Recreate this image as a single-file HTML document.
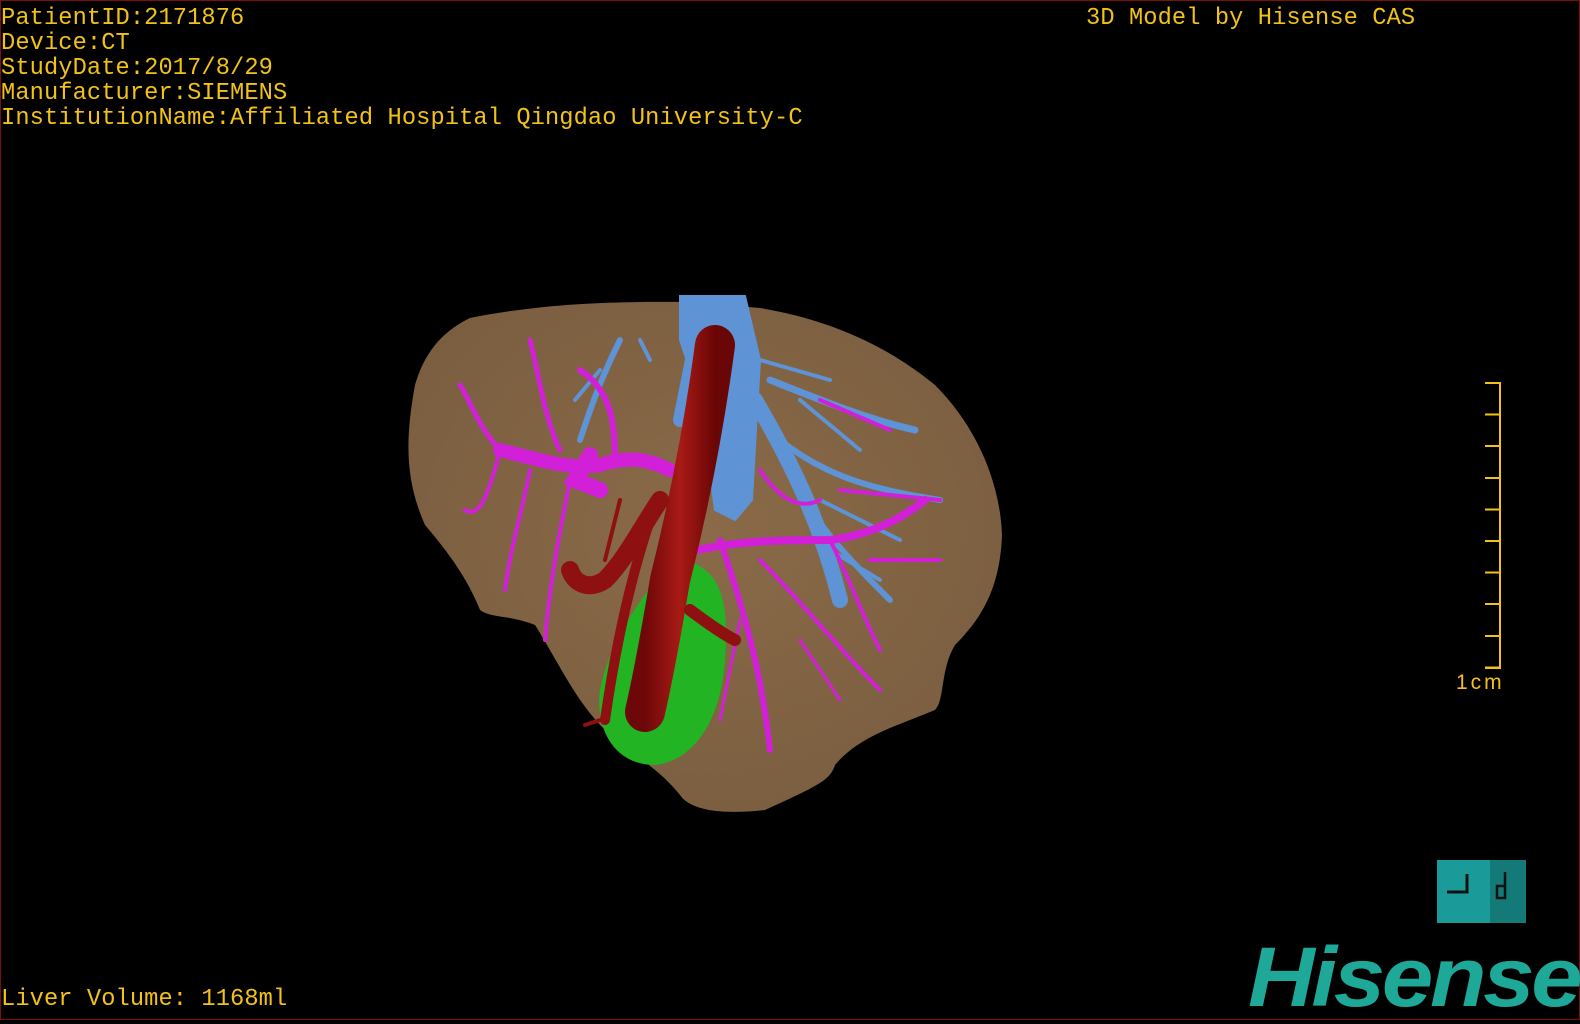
<!DOCTYPE html>
<html><head><meta charset="utf-8"><style>
html,body{margin:0;padding:0;background:#000;}
body{width:1580px;height:1020px;position:relative;overflow:hidden;}
.fr{position:absolute;left:0;top:0;width:1578px;height:1018px;border:1px solid #7a1010;}
.t{position:absolute;color:#f2c218;font-family:"Liberation Mono",monospace;font-size:23.7px;line-height:25px;white-space:pre;letter-spacing:0.1px;}
</style></head><body>
<svg width="1580" height="1020" style="position:absolute;left:0;top:0">
<defs>
<radialGradient id="lv" cx="0.5" cy="0.45" r="0.6"><stop offset="0" stop-color="#8a6a48"/><stop offset="1" stop-color="#7a5e40"/></radialGradient>
<linearGradient id="ar" x1="0" x2="1"><stop offset="0" stop-color="#6e0808"/><stop offset="0.5" stop-color="#a81a16"/><stop offset="1" stop-color="#6a0606"/></linearGradient>
</defs>
<path fill="url(#lv)" d="M470,318 C560,300 640,302 690,302 L760,308 C820,318 880,340 935,385 C975,425 1000,480 1002,535 C1000,590 980,620 955,645 C940,670 945,700 935,710 C900,725 860,735 835,765 C830,780 820,785 765,810 C720,815 690,810 680,795 C660,770 640,760 605,730 C575,700 560,665 535,625 C510,615 490,618 480,610 C470,585 455,560 425,525 C405,480 405,440 415,385 C425,350 445,330 470,318 Z"/>
<g stroke="#5e93d6" fill="none" stroke-linecap="round">
<path d="M680,296 L745,296 L760,360 L752,500 L735,520 L715,510 L700,400 L680,340 Z" fill="#5e93d6" stroke-width="2"/>
<path d="M700,320 L680,420" stroke-width="14"/>
<path d="M755,400 C790,460 820,520 840,600" stroke-width="16"/>
<path d="M770,380 C820,400 870,420 915,430" stroke-width="7"/>
<path d="M780,440 C830,480 880,490 940,500" stroke-width="6"/>
<path d="M790,470 C810,520 850,560 890,600" stroke-width="6"/>
<path d="M760,360 L830,380 M800,400 L860,450 M820,500 L900,540 M830,550 L880,580" stroke-width="4"/>
<path d="M620,340 C600,380 590,410 580,440" stroke-width="6"/>
<path d="M600,370 L575,400 M640,340 L650,360" stroke-width="4"/>
</g>
<g stroke="#d21fd8" fill="none" stroke-linecap="round">
<path d="M500,450 C540,460 570,470 600,465 C630,455 650,460 670,470" stroke-width="14"/>
<path d="M590,455 L575,480 L600,490" stroke-width="16"/>
<path d="M560,450 C545,420 540,380 530,340" stroke-width="5"/>
<path d="M500,450 C480,430 470,400 460,385" stroke-width="5"/>
<path d="M500,450 C490,490 480,520 465,510 M530,470 C520,520 510,550 505,590" stroke-width="4"/>
<path d="M570,480 C560,530 550,580 545,640" stroke-width="4"/>
<path d="M615,460 C615,420 610,390 580,370" stroke-width="6"/>
<path d="M660,560 C720,540 780,540 830,540 C870,535 900,520 925,500" stroke-width="8"/>
<path d="M720,540 C740,600 760,660 770,750" stroke-width="6"/>
<path d="M760,560 C800,600 840,650 880,690" stroke-width="4"/>
<path d="M830,540 C850,580 860,610 880,650" stroke-width="4"/>
<path d="M760,470 C780,500 800,510 820,500 M820,400 L890,430 M840,490 L940,500 M870,560 L940,560" stroke-width="4"/>
<path d="M740,620 L720,720 M800,640 L840,700" stroke-width="3"/>
</g>
<path fill="#22b422" d="M680,560 C720,565 730,600 725,660 C722,710 700,760 655,765 C615,765 595,730 600,690 C610,640 640,600 660,575 Z"/>
<g stroke-linecap="round" fill="none">
<path d="M715,345 C705,420 690,500 670,580 C660,640 650,690 645,712" stroke="url(#ar)" stroke-width="40"/>
<path d="M660,500 C640,530 625,560 605,580 C590,590 575,585 570,570" stroke="#8e1010" stroke-width="18"/>
<path d="M650,520 C630,580 615,650 605,720" stroke="#8e1010" stroke-width="10"/>
<path d="M690,610 C710,625 725,635 735,640" stroke="#8e1010" stroke-width="12"/>
<path d="M620,500 L605,560 M600,720 L585,725" stroke="#8e1010" stroke-width="4"/>
</g>
</svg>
<div class="fr"></div>
<div class="t" style="left:1px;top:6px">PatientID:2171876
Device:CT
StudyDate:2017/8/29
Manufacturer:SIEMENS
InstitutionName:Affiliated Hospital Qingdao University-C</div>
<div class="t" style="left:1086px;top:6px">3D Model by Hisense CAS</div>
<div class="t" style="left:1px;top:987px">Liver Volume: 1168ml</div>
<div style="position:absolute;left:1499px;top:382px;width:2px;height:287px;background:#f2c218"></div>
<div style="position:absolute;left:1485px;top:382px;width:16px;height:285px;background:repeating-linear-gradient(to bottom,#f2c218 0,#f2c218 2px,transparent 2px,transparent 31.6px)"></div>
<div style="position:absolute;left:1485px;top:667px;width:16px;height:2px;background:#f2c218"></div>
<div style="position:absolute;left:1456px;top:671px;color:#f2c218;font-family:'Liberation Sans',sans-serif;font-size:21px;letter-spacing:3px">1cm</div>
<div style="position:absolute;left:1437px;top:860px;width:53px;height:63px;background:#1a9a98"></div>
<div style="position:absolute;left:1490px;top:860px;width:36px;height:63px;background:#137a78"></div>
<svg width="100" height="70" style="position:absolute;left:1437px;top:860px"><path d="M10,32 H30 V14" stroke="#111" stroke-width="3" fill="none"/><path d="M68,12 V38 H60 V26 H68" stroke="#111" stroke-width="2.5" fill="none"/></svg>
<div style="position:absolute;left:1248px;top:932px;color:#1ea898;font-family:'Liberation Sans',sans-serif;font-weight:bold;font-style:italic;font-size:84px;letter-spacing:-3px;line-height:90px;transform:scaleX(1.1);transform-origin:left">Hisense</div>
</body></html>
